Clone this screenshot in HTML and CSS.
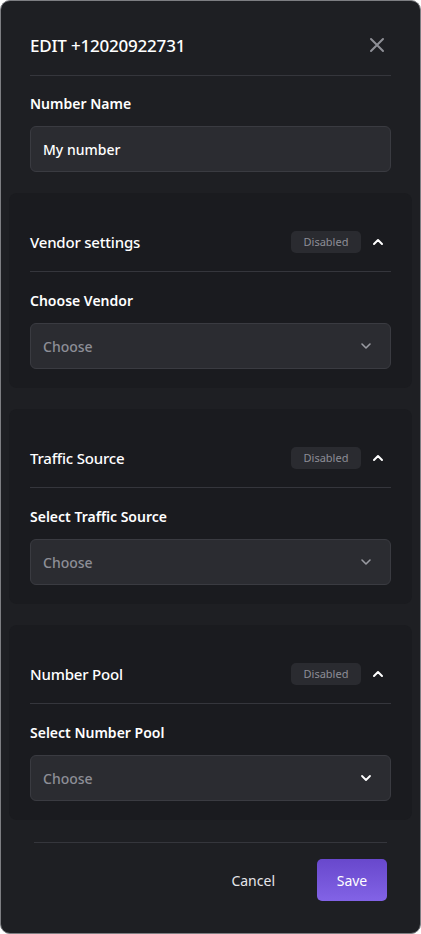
FILE: index.html
```html
<!DOCTYPE html>
<html lang="en">
<head>
  <meta charset="UTF-8">
  <meta name="viewport" content="width=device-width, initial-scale=1.0">
  <title>Edit number</title>
  <link rel="stylesheet" href="styles.css">
</head>
<body>
  <div class="modal">
    <!-- Cabeçalho -->
    <div class="modal-header">
      <h2 class="modal-title">EDIT +12020922731</h2>
      <button class="close-btn" aria-label="Close">
        <svg width="16" height="16" viewBox="0 0 16 16"><path d="M2 2 L14 14 M14 2 L2 14" stroke="#8e8f96" stroke-width="2" stroke-linecap="round"/></svg>
      </button>
    </div>

    <div class="field">
      <label for="nome">Number Name</label>
      <input type="text" id="nome" value="My number">
    </div>

    <div class="section">
      <div class="section-head">
        <span class="section-title">Vendor settings</span>
        <span class="badge">Disabled</span>
        <svg class="chevron" width="14" height="14" viewBox="0 0 14 14"><path d="M3 9 L7 5 L11 9" fill="none" stroke="#fff" stroke-width="2" stroke-linecap="round" stroke-linejoin="round"/></svg>
      </div>
      <div class="field">
        <label>Choose Vendor</label>
        <div class="select">
          <span>Choose</span>
          <svg width="14" height="14" viewBox="0 0 14 14"><path d="M3 5 L7 9 L11 5" fill="none" stroke="#9a9ba2" stroke-width="1.6" stroke-linecap="round" stroke-linejoin="round"/></svg>
        </div>
      </div>
    </div>

    <div class="section">
      <div class="section-head">
        <span class="section-title">Traffic Source</span>
        <span class="badge">Disabled</span>
        <svg class="chevron" width="14" height="14" viewBox="0 0 14 14"><path d="M3 9 L7 5 L11 9" fill="none" stroke="#fff" stroke-width="2" stroke-linecap="round" stroke-linejoin="round"/></svg>
      </div>
      <div class="field">
        <label>Select Traffic Source</label>
        <div class="select">
          <span>Choose</span>
          <svg width="14" height="14" viewBox="0 0 14 14"><path d="M3 5 L7 9 L11 5" fill="none" stroke="#9a9ba2" stroke-width="1.6" stroke-linecap="round" stroke-linejoin="round"/></svg>
        </div>
      </div>
    </div>

    <div class="section">
      <div class="section-head">
        <span class="section-title">Number Pool</span>
        <span class="badge">Disabled</span>
        <svg class="chevron" width="14" height="14" viewBox="0 0 14 14"><path d="M3 9 L7 5 L11 9" fill="none" stroke="#fff" stroke-width="2" stroke-linecap="round" stroke-linejoin="round"/></svg>
      </div>
      <div class="field">
        <label>Select Number Pool</label>
        <div class="select">
          <span>Choose</span>
          <svg width="14" height="14" viewBox="0 0 14 14"><path d="M3 5 L7 9 L11 5" fill="none" stroke="#ffffff" stroke-width="1.8" stroke-linecap="round" stroke-linejoin="round"/></svg>
        </div>
      </div>
    </div>

    <!-- Rodapé -->
    <div class="modal-footer">
      <button class="btn-cancel">Cancel</button>
      <button class="btn-save">Save</button>
    </div>
  </div>
</body>
</html>
```

FILE: styles.css
```css
/* Modal escuro de edição */
body {
  margin: 0;
  background-color: #fff;
  font-family: "Noto Sans", "Open Sans", sans-serif;
  color: #fff;
}
.modal {
  box-sizing: border-box;
  width: 421px;
  height: 934px;
  background-color: #1e1f23;
  border: 1px solid #7d7e82;
  border-radius: 10px;
}
.modal-header {
  display: flex;
  align-items: center;
  justify-content: space-between;
  height: 30px;
  margin: 29px 29px 0;
  padding-bottom: 15px;
  border-bottom: 1px solid #35363c;
}
.modal-title {
  margin: 0;
  font-size: 17px;
  font-weight: 500;
  letter-spacing: -0.2px;
}
.close-btn {
  background: none;
  border: none;
  padding: 0;
  margin-right: 6px;
  display: flex;
  cursor: pointer;
}
.modal > .field {
  margin: 18px 29px 0;
}
label {
  display: block;
  font-size: 14px;
  font-weight: 600;
  line-height: 20px;
  margin-bottom: 12px;
}
input[type="text"],
.select {
  box-sizing: border-box;
  width: 100%;
  height: 46px;
  padding: 0 12px;
  background-color: #2b2c31;
  border: 1px solid #3a3b41;
  border-radius: 6px;
  color: #fff;
  font-family: inherit;
  font-size: 14px;
  font-weight: 500;
}
.select {
  display: flex;
  align-items: center;
  justify-content: space-between;
  padding-right: 17px;
  color: #8d8e96;
}
.section {
  background-color: #1a1b1f;
  border-radius: 8px;
  margin: 21px 8px 0;
  padding: 34px 21px 19px;
}
.section-head {
  display: flex;
  align-items: center;
  height: 30px;
  padding-bottom: 14px;
  border-bottom: 1px solid #35363c;
  margin-bottom: 19px;
}
.section-title {
  flex: 1;
  font-size: 15px;
  font-weight: 500;
  letter-spacing: -0.2px;
}
.badge {
  box-sizing: border-box;
  width: 70px;
  height: 22px;
  line-height: 22px;
  text-align: center;
  background-color: #2a2b30;
  border-radius: 5px;
  color: #8d8e96;
  font-size: 11px;
}
.chevron {
  margin-left: 10px;
  margin-right: 6px;
}
.modal-footer {
  display: flex;
  justify-content: flex-end;
  align-items: center;
  gap: 36px;
  margin: 22px 33px 0;
  padding-top: 16px;
  border-top: 1px solid #35363c;
}
.btn-cancel {
  background: none;
  border: none;
  color: #e6e6ea;
  font-family: inherit;
  font-size: 14px;
  cursor: pointer;
}
.btn-save {
  width: 70px;
  height: 42px;
  border: none;
  border-radius: 5px;
  background: linear-gradient(180deg, #6848cc, #8263e6);
  color: #fff;
  font-family: inherit;
  font-size: 14px;
  cursor: pointer;
}
```
